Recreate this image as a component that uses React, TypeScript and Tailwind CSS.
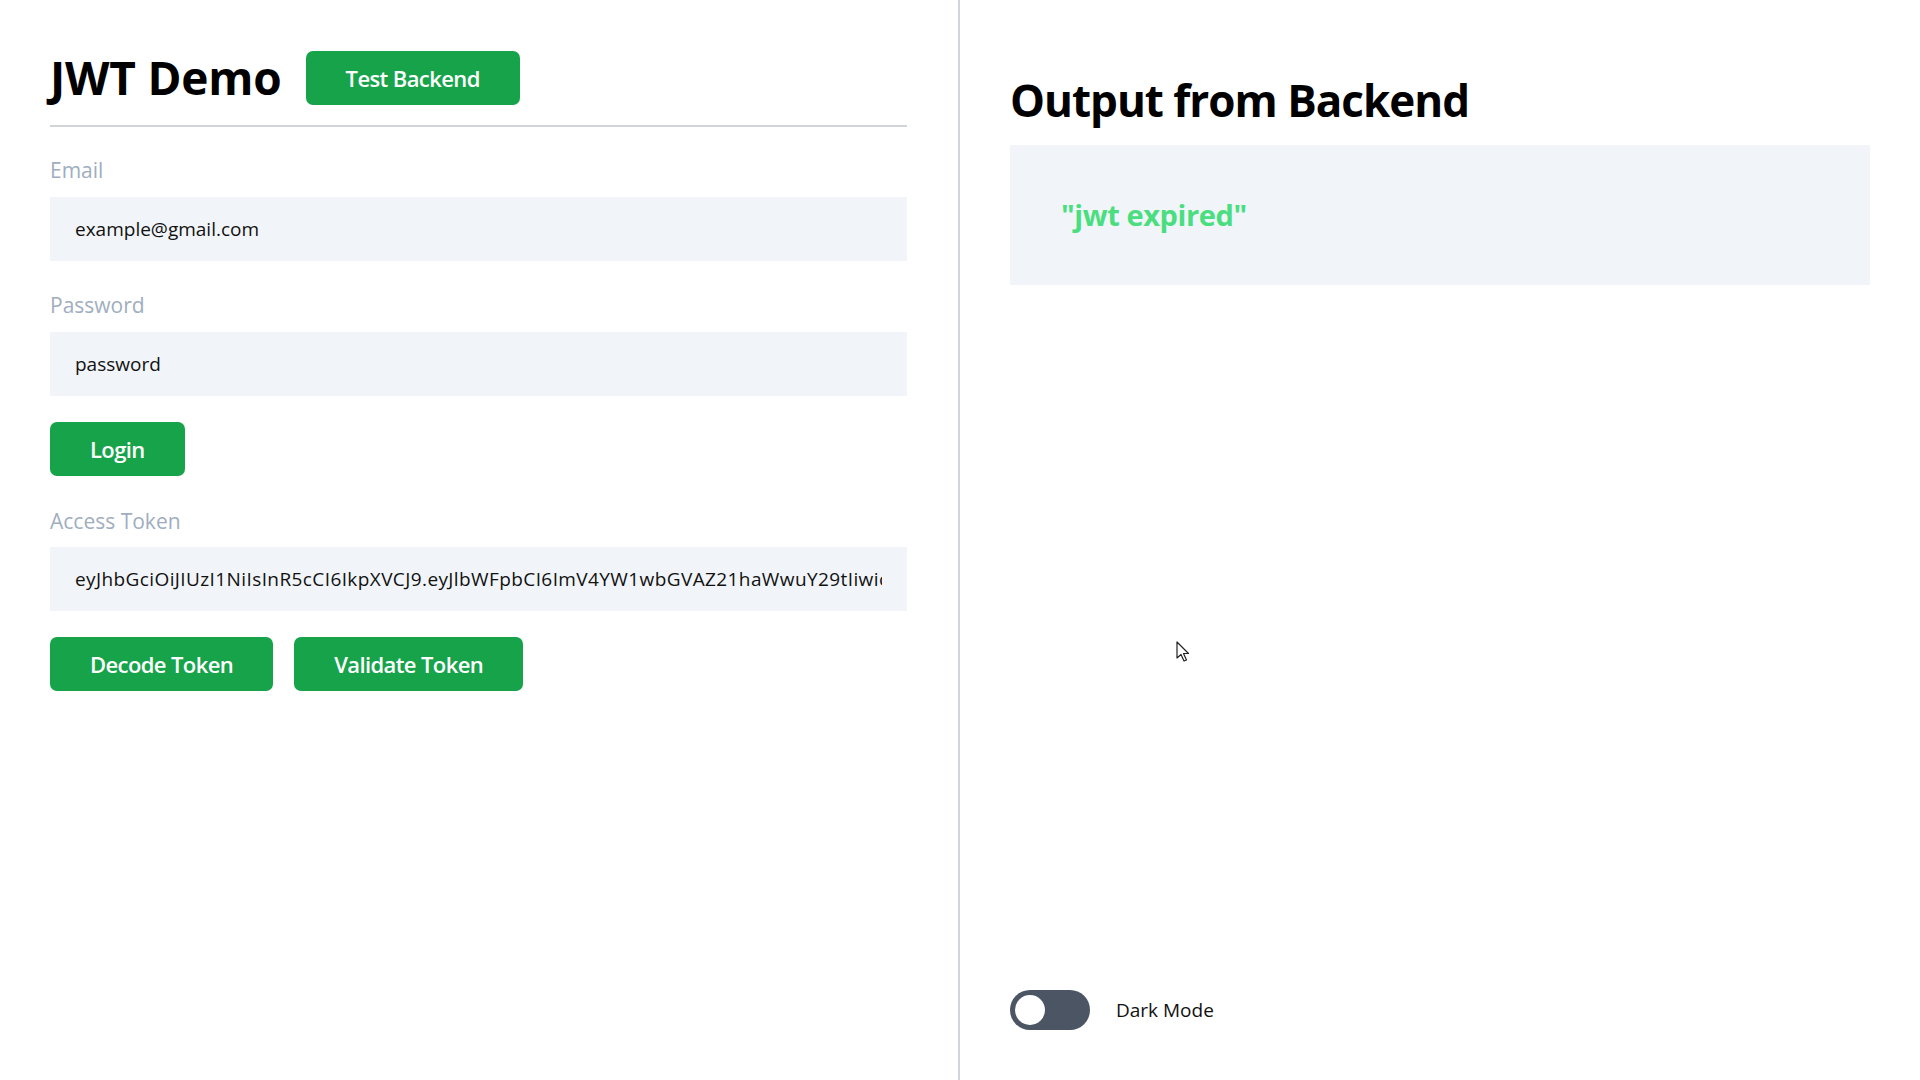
import React from "react";

const TOKEN =
  "eyJhbGciOiJIUzI1NiIsInR5cCI6IkpXVCJ9.eyJlbWFpbCI6ImV4YW1wbGVAZ21haWwuY29tIiwicGFzc3dvcmQiOiJwYXNzd29yZCIsImlhdCI6MTcwMDAwMDAwMCwiZXhwIjoxNzAwMDAwMDYwfQ.abc";

function Field({ label, value, first }: { label: string; value: string; first?: boolean }) {
  return (
    <div>
      <div
        className={`${first ? "mt-[28px]" : "mt-[29px]"} mb-[12px] h-[30px] leading-[30px] text-[21px] text-[#a0aec0]`}
      >
        {label}
      </div>
      <input
        readOnly
        value={value}
        className="block w-full h-[64px] px-[25px] bg-[#f1f5f9] text-[19px] text-[#111] outline-none"
      />
    </div>
  );
}

function GreenButton({ children }: { children: React.ReactNode }) {
  return (
    <button className="h-[54px] px-[40px] rounded-[7px] bg-[#16a34a] text-white text-[22px] font-semibold leading-none tracking-[-0.6px]">
      {children}
    </button>
  );
}

export default function App() {
  return (
    <div
      className="relative flex h-[1080px] w-[1920px] bg-white text-black"
      style={{ fontFamily: '"Open Sans", "Noto Sans", sans-serif' }}
    >
      {/* Left panel */}
      <div className="w-[960px] shrink-0 border-r-2 border-[#d1d5db] pl-[50px] pr-[51px]">
        <div className="pt-[50px] pb-[20px] border-b-2 border-[#d1d5db] flex items-center gap-[24px]">
          <h1 className="text-[46px] font-bold leading-[55px] tracking-[-0.2px]">JWT Demo</h1>
          <GreenButton>Test Backend</GreenButton>
        </div>
        <Field label="Email" value="example@gmail.com" first />
        <Field label="Password" value="password" />
        <div className="mt-[26px]">
          <GreenButton>Login</GreenButton>
        </div>
        <div>
          <div className="mt-[30px] mb-[11px] h-[30px] leading-[30px] text-[21px] text-[#a0aec0]">
            Access Token
          </div>
          <input
            readOnly
            value={TOKEN}
            className="block w-full h-[64px] px-[25px] bg-[#f1f5f9] text-[19px] text-[#111] outline-none tracking-[0.4px]"
          />
        </div>
        <div className="mt-[26px] flex gap-[21px]">
          <GreenButton>Decode Token</GreenButton>
          <GreenButton>Validate Token</GreenButton>
        </div>
      </div>

      {/* Right panel */}
      <div className="flex-1 flex flex-col pl-[50px] pr-[50px] pb-[50px]">
        <h2 className="mt-[73px] text-[44px] font-bold leading-[54px] tracking-[-1px]">
          Output from Backend
        </h2>
        <div className="mt-[18px] h-[140px] bg-[#f1f5f9] px-[51px] flex items-center">
          <span className="text-[29px] font-bold text-[#4ade80] tracking-[-0.4px]">"jwt expired"</span>
        </div>
        <div className="mt-auto flex items-center gap-[26px]">
          <div className="w-[80px] h-[40px] rounded-full bg-[#4b5563] flex items-center px-[5px]">
            <div className="w-[30px] h-[30px] rounded-full bg-white" />
          </div>
          <span className="text-[19px] text-[#111]">Dark Mode</span>
        </div>
      </div>

      {/* mouse cursor */}
      <svg
        className="absolute left-[1176px] top-[641px]"
        width="14"
        height="22"
        viewBox="0 0 14 22"
      >
        <path
          d="M1 1 L1 17 L5 13.5 L8 20 L10.5 19 L7.5 12.5 L12.5 12.5 Z"
          fill="white"
          stroke="#222"
          strokeWidth="1.2"
          strokeLinejoin="round"
        />
      </svg>
    </div>
  );
}
